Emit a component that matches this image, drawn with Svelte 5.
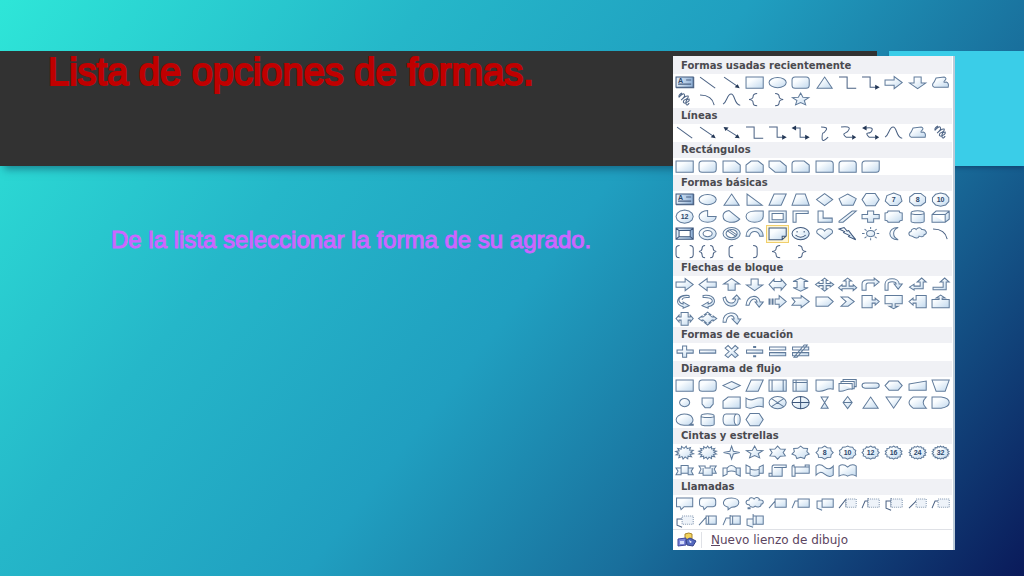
<script>
  const el = (rx, ry, cx = 11.5, cy = 8.5) =>
    `M${cx - rx} ${cy}a${rx} ${ry} 0 1 0 ${2 * rx} 0a${rx} ${ry} 0 1 0 ${-2 * rx} 0z`;

  const poly = (n, rx, ry, inner = 0, turn = -90) => {
    const count = inner ? n * 2 : n;
    const points = [];
    for (let i = 0; i < count; i++) {
      const a = ((turn + (360 * i) / count) * Math.PI) / 180;
      const k = inner && i % 2 ? inner : 1;
      points.push(`${(11.5 + rx * k * Math.cos(a)).toFixed(2)} ${(8.5 + ry * k * Math.sin(a)).toFixed(2)}`);
    }
    return `M${points.join('L')}z`;
  };

  const fill = (d, text) => ({ d, text });
  const line = (d, head = '') => ({ d, head, open: true });
  const dashed = (d, box) => ({ d, box, open: true });

  const rect = fill('M3 3h17v11H3z');
  const rounded = fill('M6 3h11q3 0 3 3v5q0 3-3 3H6q-3 0-3-3V6q0-3 3-3z');
  const oval = fill(el(8.5, 5));
  const triangle = fill('M11.5 3L19 14H4z');
  const textBox = { d: 'M3 3h17v10H3z', label: true, heavy: true, deep: true, extra: 'M13 6h5M5 10h13M3 13.5h17.5V3' };
  const diagonal = line('M4 3L19 14');
  const arrow = line('M4 3L17 12', 'M19.500 14L14.500 13L17.500 10z');
  const elbow = line('M3 3h8v11h9');
  const elbowArrow = line('M3 3h8v10h6', 'M20.500 13L16 10.500V15.500z');
  const elbowDouble = line('M6 4h5v9h6', 'M2.500 4L7 1.500V6.500zM20.500 13L16 10.500V15.500z');
  const wave = line('M3 13C7 11 7 3 11 3S14 14 20 14');
  const freeform = fill('M7 4L15 3q3 1 1 3-3 3 1 2 3 1 2 5H5q-3-2 0-5z');
  const scribble = line('M9 2q-4 2-3 4 4-4 5-3 2 2-3 6 5-5 7-4 1 2-4 4-2 3 1 3 5-2 4-4-4 0-3 5 1 2 3-1');
  const arc = line('M4 4Q16 4 18 14');
  const openBrace = line('M14 2.5q-4 0-4 3 0 2.500-4 3 4 .5 4 3 0 3 4 3');
  const closeBrace = line('M9 2.5q4 0 4 3 0 2.500 4 3-4 .5-4 3 0 3-4 3');
  const right = fill('M3 6h9V2.500L20 8.500 12 14.500V11H3z');
  const left = fill('M20 6h-9V2.500L3 8.500 11 14.500V11h9z');
  const up = fill('M8 14V8H3.500L11.500 2.500 19.500 8H15v6z');
  const down = fill('M8 3v6H3.500L11.500 14.500 19.500 9H15V3z');
  const hexagon = fill('M7 2.500h9l4 6-4 6H7l-4-6z');
  const star5 = fill(poly(5, 8.5, 6.5, 0.45));
  const parallelogram = fill('M8 3h12l-5 11H3z');
  const can = fill('M5 5v8c0 2 13 2 13 0V5c0-3-13-3-13 0c0 2 13 2 13 0');

  const sections = [
    {
      name: 'Formas usadas recientemente',
      shapes: [textBox, diagonal, arrow, rect, oval, rounded, triangle, elbow, elbowArrow, right, down, freeform,
        scribble, arc, wave, openBrace, closeBrace, star5]
    },
    {
      name: 'Líneas',
      shapes: [diagonal, arrow,
        line('M6 5L17 12', 'M3.500 3L8.500 3.500L5.500 7zM19.500 14L14.500 13.500L17.500 10z'),
        elbow, elbowArrow, elbowDouble,
        line('M8 3q7 0 5 3t-3 3-1 5 6-1'),
        line('M5 3q9-1 8 2t-4 4 1 4h6', 'M20 13L16 10.500V15.500z'),
        line('M7 4q7-1 6 2t-4 3 1 4h6', 'M3 4L7.500 1.500V6.500zM20 13L16 10.500V15.500z'),
        wave, freeform, scribble]
    },
    {
      name: 'Rectángulos',
      shapes: [rect, rounded,
        fill('M3 3h12l5 4v7H3z'), fill('M8 3h7l5 4v7H3V7z'), fill('M3 3h11l6 5v6H9L3 9z'),
        fill('M6 3h9l5 4v7H3V6q0-3 3-3z'), fill('M3 3h14q3 0 3 3v8H3z'),
        fill('M6 3h11q3 0 3 3v8H3V6q0-3 3-3z'), fill('M6 3h14v8q0 3-3 3H3V6q0-3 3-3z')]
    },
    {
      name: 'Formas básicas',
      selected: 28,
      shapes: [textBox, oval, triangle, fill('M4 3v11h15z'), parallelogram, fill('M7 3h9l4 11H3z'),
        fill('M11.500 2.500L19.500 8.500 11.500 14.500 3.500 8.500z'), fill('M11.500 3L20 7.500 17 14H6L3 7.500z'), hexagon,
        fill(poly(7, 8.5, 6.5), '7'), fill(poly(8, 8.5, 6.5, 0, -67), '8'), fill(poly(10, 8.5, 6.5), '10'),
        fill(poly(12, 8.5, 6.5), '12'),
        fill('M11.500 2.500V8.500H20C20 16 3 16 3 8.500 3 5 7 2.500 11.500 2.500z'),
        fill('M9 2.500L19.500 11C15 16 3 15 3 8 3 5 6 3 9 2.500z'),
        fill('M12 3h8v5.500C20 16 3 16 3 8.500 3 5 7 3 12 3z'),
        fill('M3 3h17v11H3zM6 5.500v6h11v-6z'), fill('M4 3h15v2.500H7V14H4z'), fill('M5 3h5v7h9v4H5z'),
        fill('M16 3h4L7 14H3v-1z'), fill('M8.500 3h6v3.500H20v4h-5.500V14h-6v-3.500H3v-4h5.500z'),
        fill('M6 3h11q0 2 3 2v7q-3 0-3 2H6q0-2-3-2V5q3 0 3-2z'), can,
        fill('M3 6.500L7 3h13v8l-4 3H3zM3 6.500h13V14M16 6.500L20 3'),
        { d: 'M3 3h17v11H3zM6 5.500h11v6H6zM3 3l3 2.500M20 3l-3 2.500M20 14l-3-2.500M3 14l3-2.500', heavy: true, deep: true },
        fill(el(8.5, 6) + el(4.5, 3)),
        fill(el(8.5, 6) + el(5.5, 4) + 'M7 5.500L16 11.500M9 4.500L17 10'),
        fill('M3 11C3 0 20 0 20 11h-3.500C15 5 8 5 6.500 11z'),
        { d: 'M3 3h17v8l-4 3.500H3zM20 11h-4v3', heavy: true },
        { d: el(8.5, 6) + 'M8 6v1.500M15 6v1.500M6.500 10q5 4 10 0', heavy: true },
        fill('M11.500 14L4 8C2 4 9 2 11.500 6 14 2 21 4 19 8z'),
        { d: 'M3 4l5-1.500 3 3.500 1.500-.5 3 4 4 5-7-3 1-1-6-3 1-1z', heavy: true },
        fill(el(4, 3) + 'M11.500 2v2M11.500 13v2M3 8.500h2.500M17.500 8.500H20M5.500 4l2 1.500M17.500 4l-2 1.500M5.500 13l2-1.500M17.500 13l-2-1.500'),
        fill('M16 2.500C5 2 5 15 16 14.500C10 12 10 5 16 2.500z'),
        fill('M6 11C2 11 2 7 5 6.500 5 3 9 3 10 4.500c2-3 5-2 5.500 0C20 4 22 9 18 9.500c0 3-4 2-5 1.500-1 3-4 2-7 0z'),
        arc,
        line('M6.5 2.500Q3 2.500 3 5.500v6q0 3 3.500 3M16.500 2.500q3.500 0 3.500 3v6q0 3-3.500 3'),
        line('M9 2.500Q6 2.500 6 5.500 6 8 3 8.500q3 .5 3 3 0 3 3 3M14 2.500q3 0 3 3 0 2.500 3 3-3 .5-3 3 0 3-3 3'),
        line('M13 2.500q-4 0-4 3v6q0 3 4 3'), line('M10 2.500q4 0 4 3v6q0 3-4 3'), openBrace, closeBrace]
    },
    {
      name: 'Flechas de bloque',
      shapes: [right, left, up, down,
        fill('M3 8.500L8 3v2.500h7V3l5 5.500-5 5.500v-2.500H8V14z'),
        fill('M11.500 2L19 5.500h-4v6h4L11.500 15 4 11.500h4v-6H4z'),
        fill('M11.500 2l3 2.500H13v3h4V6l3.500 2.500L17 11V9.500h-4v3h1.500l-3 2.500-3-2.500H10v-3H6V11L2.500 8.500 6 6v1.500h4v-3H8.500z'),
        fill('M11.500 2l4 3H13v5h4V8.500l3.500 3L17 14.500V12.500H6v2l-3.500-3L6 8.500V10h4V5H7.500z'),
        fill('M3 14V8q0-4 5-4h7V2l5 4-5 4V7H9Q7 7 7 9v5z'),
        fill('M3 14V8c0-7 14-7 14 0h3l-4 5-4-5h2c0-3-8-3-8 0v6z'),
        fill('M3.500 11L8 8v2h6V6h-3l4.500-4L20 6h-3v6.500H8V14z'),
        fill('M4 11h10V6h-3l4.500-4L20 6h-3v7.500H4z'),
        fill('M16 2.500C5 2 3 9 10 11V9l6 3.500-6 2.500v-1.500C1 12 3 1 16 2.500zM16 2.500v2C11 4 9 5 9 7'),
        fill('M7 2.500C20 1 22 12 12 13.500V15l-6-2.500L12 9v2c7-2 5-7-5-6.500z'),
        fill('M3 5l2.500-1c1 7 9 8 10 2h-3l4-4 3.500 4H18C18 16 4 15 3 5z'),
        fill('M3 12C4 1 16 1 17 9h3l-4 5-4-5h2C13 4 8 5 6 12z'),
        fill('M3 6h1v5H3zM6 6h1v5H6zM9 6h4V2.500L20 8.500 13 14.500V11H9z'),
        fill('M3 5h9V2.500L20 8.500 12 14.500V12H3l3-3.500z'), fill('M3 4h12l5 4.500-5 4.500H3z'),
        fill('M5 4h7l6 4.500-6 4.500H5l5-4.500z'),
        fill('M3 2.500h10V7h3V5l4 3.500-4 3.500v-2h-3v4.500H3z'),
        fill('M3 2.500h17v8h-7V13h3l-4.500 2.500L7 13h3v-2.500H3z'),
        fill('M20 2.500H10V7H7V5L3 8.500 7 12v-2h3v4.500h10z'),
        fill('M3 14.500h17v-8h-7V5h3l-4.500-3L7 5h3v1.500H3z'),
        fill('M8 2.500h7V7h2V5l3 3.500-3 3.500v-2h-2v5H8v-5H6v2L3 8.500 6 5v2h2z'),
        fill('M11.500 2l3 2.500H13L16 7h1V6l3.500 2.500L17 11v-1h-1l-3 2.500h1.500l-3 2.500-3-2.500H10L7 10H6v1L2.500 8.500 6 6v1h1l3-2.500H8.500z'),
        fill('M3 12C2 1 18 0 18 9h2.500L17 14l-5-5h2C14 4 7 4 6 12z')]
    },
    {
      name: 'Formas de ecuación',
      shapes: [fill('M9.500 3h4v4H20v3h-6.500v4h-4v-4H4V7h5.500z'), fill('M3.500 7h16v3h-16z'),
        fill('M5 5l3-2.500 3.500 3.500L15 2.500 18 5l-4 3.500 4 3.500-3 2.500L11.500 11 8 14.500 5 12l4-3.500z'),
        fill('M3.500 7h16v3h-16zM10.500 3.500h2v1h-2zM10.500 12.500h2v1h-2z'),
        fill('M3.500 4h16v3h-16zM3.500 9.500h16v3h-16z'),
        fill('M3.500 4h16v3h-16zM3.500 9.500h16v3h-16zM5 14L15 2h3L8 14z')]
    },
    {
      name: 'Diagrama de flujo',
      shapes: [rect, rounded, fill('M11.500 4.500L20 8.500 11.500 12.500 3 8.500z'), parallelogram,
        fill('M3 3h17v11H3zM6 3v11M17 3v11'), fill('M4 3h14v11H4zM7 3v11M4 5.500h14'),
        fill('M3 3h17v9c-8-2-8 4-17 1.500z'), fill('M7 5V2.500h13v7h-2M5 6.500v-2h13v7h-2M3 6.500h13V12c-6-1-7 3-13 2z'),
        fill('M6 6h11q3 0 3 2.500T17 11H6q-3 0-3-2.500T6 6z'), fill('M7 4h9l4 4.500-4 4.500H7L3 8.500z'),
        fill('M3 7l17-3v9H3z'), fill('M3 3h17l-4 11H7z'), fill(el(5, 4)), fill('M6 4h11v6l-3 3.500H9L6 10z'),
        fill('M8 3h12v11H3V7z'), fill('M3 4q4 3 8.500 1T20 4v9q-4-2-8.500 0T3 13z'),
        fill(el(8.5, 6) + 'M5.500 4.500l12 8M17.500 4.500l-12 8'), { d: el(8.5, 6) + 'M11.500 2.500v12M3 8.500h17', heavy: true },
        fill('M8 3h7L8 14h7z'), fill('M11.500 2.500L16 8.500l-4.500 6L7 8.500zM7 8.500h9'), triangle, fill('M4 3h15l-7.500 11z'),
        fill('M7 3h13q-6 5.500 0 11H7q-8-5.500 0-11z'), fill('M3 3h9q8 1 8 5.500T12 14H3z'),
        fill('M20 14h-9C0 14 1 3 11 3c9 0 11 7 6 10h3z'), can,
        fill('M6 3h11c4 0 4 11 0 11H6C2 14 2 3 6 3zM17 3c-4 0-4 11 0 11'), hexagon]
    },
    {
      name: 'Cintas y estrellas',
      shapes: [fill(poly(12, 9, 6.5, 0.66, -80)), fill(poly(14, 9, 6.5, 0.7)), fill(poly(4, 8, 6.5, 0.3)), star5,
        fill(poly(6, 8.8, 6.5, 0.62)), fill(poly(7, 8.8, 6.5, 0.72)), fill(poly(8, 8.5, 6.5, 0.82), '8'),
        fill(poly(10, 8.5, 6.5, 0.88), '10'), fill(poly(12, 8.5, 6.5, 0.85), '12'), fill(poly(14, 8.5, 6.5, 0.85), '16'),
        fill(poly(16, 8.5, 6.5, 0.84), '24'), fill(poly(18, 8.5, 6.5, 0.84), '32'),
        fill('M3 6h5V3.500h7V6h5l-2 3 2 3.500h-5V11H8v1.500H3L5 9zM8 6v5M15 6v5'),
        fill('M3 4h6v2h5V4h6l-2 3 2 4h-4v2H7v-2H3l2-4zM7 6v5M16 6v5'),
        fill('M3 6h4q4-5 9 0h4v8l-4-2v-2q-5-2-9 0v2l-4 2zM7 6v4M16 6v4'),
        fill('M3 3l4 2v2q5 2 9 0V5l4-2v8h-4v2q-5 2-9 0v-2H3zM7 7v4M16 7v4'),
        fill('M7 3h13v2.500h-4V14H3v-3h3V5q0-2 2-2M8 5.500h8M6 11v3'),
        fill('M3 5q0-2 2-2v2h11V3h4v8H6v3H3zM6 5v6M16 5h4'),
        fill('M3 4q4-3 8.500 1T20 4v9q-4 3-8.500-1T3 13z'),
        fill('M3 4q4-3 8.500 1Q16 1 20 4v10q-4-3-8.500 0-4-3-8.500 0z')]
    },
    {
      name: 'Llamadas',
      shapes: [fill('M3.500 3h16v8.500H11L8 14.500 7 11.500H3.500z'),
        fill('M6 3h11q2.500 0 2.500 3v3q0 2.500-2.500 2.500h-6l-3 3-1-3q-3.500 0-3.500-2.500V6q0-3 2.500-3z'),
        fill('M8 12C1 10 2 3 11.500 3S21 12 11.500 12L8 14.500z'),
        fill('M6 9.500C2 10 2 5 6 5c0-3 4-3 5-1 2-3 6-1 5 1 5-1 5 4 2 4 0 4-5 3-6 2-2 2-5 1-6-1.500zM5 12.500h2v1H5z'),
        fill('M9 4h11v8H9zM3 13l6-7'), fill('M9 4h11v8H9zM3 13l3-7h3'), fill('M9 4h11v8H9zM9 6H4v7l5 2'),
        dashed('M3 13L10 4M10 4v8', 'M10 4h10v8H10z'), dashed('M3 13l3-7h3M9 3v9', 'M9 4h11v8H9z'),
        dashed('M9 3v9M9 6H4v7l5 2', 'M9 4h11v8H9z'), dashed('M3 13l7-7', 'M10 4h10v8H10z'),
        dashed('M3 13l3-7h3', 'M9 4h11v8H9z'), dashed('M9 7H4v6l5 2', 'M9 4h11v8H9z'),
        fill('M10 4h10v8H10zM12.500 4v8M3 13l7-8'), fill('M10 4h10v8H10zM12.500 4v8M3 13l3-7h4M10 3v10'),
        fill('M10 4h10v8H10zM13 4v8M10 7H4v6l6 2M10 2v11')]
    }
  ];
</script>

<main class="slide">
  <div class="band"></div>
  <div class="accent"></div>
  <h1>Lista de opciones de formas.</h1>
  <p class="lead">De la lista seleccionar la forma de su agrado.</p>

  <div class="menu">
    <svg class="defs" width="0" height="0" aria-hidden="true">
      <linearGradient id="tint" x1="0" y1="0" x2="1" y2="1">
        <stop offset="0.3" stop-color="#fafdff" />
        <stop offset="1" stop-color="#c2d9ee" />
      </linearGradient>
      <linearGradient id="deep" x1="0" y1="0" x2="1" y2="0">
        <stop offset="0" stop-color="#e6eff8" />
        <stop offset="1" stop-color="#8fb0d6" />
      </linearGradient>
    </svg>
    <div class="list">
      {#each sections as section}
        <section>
          <h2>{section.name}</h2>
          <div class="gallery">
            {#each section.shapes as shape, i}
              <button type="button" class:selected={section.selected === i} aria-label={`${section.name} ${i + 1}`}>
                <svg viewBox="0 0 23 17" aria-hidden="true">
                  <path
                    class="shape"
                    class:open={shape.open}
                    class:heavy={shape.heavy}
                    class:deep={shape.deep}
                    d={shape.d}
                    fill-rule="evenodd"
                  />
                  {#if shape.head}<path class="head" d={shape.head} />{/if}
                  {#if shape.box}<path class="dash" d={shape.box} />{/if}
                  {#if shape.extra}<path class="shape open" d={shape.extra} />{/if}
                  {#if shape.text}<text x="11.500" y="11">{shape.text}</text>{/if}
                  {#if shape.label}<text x="7.500" y="9">A</text>{/if}
                </svg>
              </button>
            {/each}
          </div>
        </section>
      {/each}
      <button type="button" class="canvas">
        <span class="mark">
          <svg viewBox="0 0 20 16" width="20" height="16" aria-hidden="true">
            <path d="M8 2q4-2 7 0v8q-4 2-7 0z" fill="#f4d35c" stroke="#a9852c" />
            <path d="M1 7l8-1v7l-8 1z" fill="#7d86d8" stroke="#3e479c" />
            <path d="M9 8l4-2 6 3-3 5-6-1z" fill="#5468bd" stroke="#34428b" />
            <path d="M3 9h4v3H3z" fill="#d5dcfa" />
            <path d="M12 8l3 2-2 1z" fill="#f2f5ff" />
          </svg>
        </span>
        <span class="caption"><u>N</u>uevo lienzo de dibujo</span>
      </button>
    </div>
    <div class="rail"></div>
  </div>
</main>

<style>
  :global(body) {
    margin: 0;
  }

  .slide {
    min-height: 100vh;
    display: grid;
    grid-template-columns: minmax(0, 1fr) 282px 69px;
    grid-template-rows: 51px 115px 1fr;
    background: linear-gradient(128deg, #2ee6d8 0%, #25b7c9 29%, #209fc0 51%, #196f9c 72%, #0a1a5a 100%);
    font-family: 'Liberation Sans', Arial, sans-serif;
  }

  .band {
    grid-area: 2 / 1 / 3 / 4;
    margin-right: 147px;
    background: #323232;
    box-shadow: 0 7px 8px -4px rgba(10, 50, 80, 0.5);
  }

  .accent {
    grid-area: 2 / 2 / 3 / 4;
    justify-self: end;
    width: 135px;
    background: #3acde8;
    box-shadow: 0 3px 4px -1px rgba(10, 30, 70, 0.4);
  }

  h1 {
    grid-area: 2 / 1;
    margin: 0;
    padding-left: 48px;
    font-size: 38px;
    line-height: 42px;
    font-weight: 400;
    color: #c00000;
    -webkit-text-stroke: 2px #c00000;
    white-space: nowrap;
  }

  .lead {
    grid-area: 3 / 1;
    margin: 0;
    padding: 60px 0 0 111px;
    font-size: 24px;
    line-height: 28px;
    color: #cc66ff;
    -webkit-text-stroke: 1px #cc66ff;
    white-space: nowrap;
  }

  .menu {
    grid-area: 1 / 2 / 4 / 3;
    align-self: start;
    margin: 56px 0 26px;
    display: flex;
    background: #fff;
    font-family: 'DejaVu Sans', sans-serif;
  }

  .defs {
    position: absolute;
  }

  .list {
    flex: 1;
    padding-top: 2px;
    background: linear-gradient(#f0f1f5 0 2px, #fff 2px);
  }

  .rail {
    width: 3px;
    background: linear-gradient(to right, #fff 1px, #bccbd8 1px);
  }

  h2 {
    margin: 0;
    padding-left: 8px;
    height: 16px;
    background: #f0f1f5;
    color: #4a4a50;
    font-size: 10px;
    line-height: 16px;
    font-weight: 700;
    white-space: nowrap;
  }

  .gallery {
    display: grid;
    grid-template-columns: repeat(12, 1fr);
  }

  button {
    margin: 0;
    padding: 0;
    border: 0;
    background: none;
    font: inherit;
  }

  .gallery button {
    display: block;
    aspect-ratio: 27 / 20;
  }

  .gallery svg {
    display: block;
    width: 100%;
    height: 100%;
  }

  .gallery .selected {
    background: #fff6d4;
    box-shadow: inset 0 0 0 1px #f0cf6c;
  }

  .shape {
    fill: url(#tint);
    stroke: #607b9b;
  }

  .heavy {
    stroke: #3d577c;
  }

  .deep {
    fill: url(#deep);
  }

  .open {
    fill: none;
    stroke: #4a6183;
  }

  .head {
    fill: #233756;
  }

  .dash {
    fill: #eef3f9;
    stroke: #8196b0;
    stroke-dasharray: 1 1;
  }

  text {
    font: 700 7px 'Liberation Sans', Arial, sans-serif;
    fill: #2c476c;
    text-anchor: middle;
  }

  .canvas {
    display: flex;
    align-items: center;
    width: 100%;
    height: 21px;
    border-top: 1px solid #dfe1e6;
    text-align: left;
  }

  .mark {
    display: flex;
    justify-content: center;
    width: 28px;
    border-right: 1px solid #dfe1e6;
  }

  .caption {
    padding-left: 9px;
    font-size: 12px;
    line-height: 16px;
    color: #5c4560;
    white-space: nowrap;
  }
</style>
